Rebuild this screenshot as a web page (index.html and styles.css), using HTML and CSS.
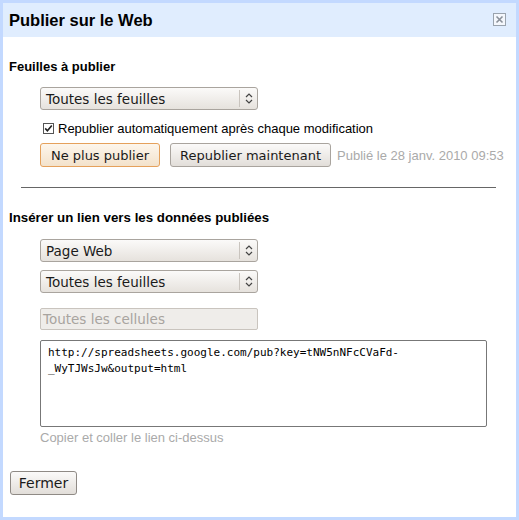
FILE: index.html
```html
<!DOCTYPE html>
<html lang="fr">
<head>
    <meta charset="UTF-8">
    <title>Publier sur le Web</title>
    <link rel="stylesheet" href="styles.css">
</head>
<body>
    <div class="dialog">
        <div class="title-bar">
            <span class="title">Publier sur le Web</span>
            <span class="close">
                <svg width="13" height="13" viewBox="0 0 13 13">
                    <rect x="0.5" y="0.5" width="12" height="12" fill="#f4f7fc" stroke="#9aa3ad"/>
                    <path d="M3.5 3.5 L9.5 9.5 M9.5 3.5 L3.5 9.5" stroke="#8a9099" stroke-width="1.6"/>
                </svg>
            </span>
        </div>
        <div class="content">
            <h3>Feuilles à publier</h3>
            <div class="group">
                <div class="select">
                    <span>Toutes les feuilles</span>
                    <span class="arrow"><svg width="8" height="11" viewBox="0 0 8 11"><path d="M1 4 L4 1 L7 4 M1 7 L4 10 L7 7" fill="none" stroke="#444" stroke-width="1.2"/></svg></span>
                </div>
                <label class="check">
                    <span class="box"><svg width="11" height="11" viewBox="0 0 11 11"><rect x="0.5" y="0.5" width="10" height="10" fill="#fff" stroke="#555"/><path d="M2.2 5.4 L4.4 7.8 L8.8 2.4" fill="none" stroke="#222" stroke-width="1.6"/></svg></span>
                    Republier automatiquement après chaque modification
                </label>
                <div class="actions">
                    <button class="btn btn-primary">Ne plus publier</button>
                    <button class="btn">Republier maintenant</button>
                    <span class="status">Publié le 28 janv. 2010 09:53</span>
                </div>
            </div>
            <hr>
            <h3>Insérer un lien vers les données publiées</h3>
            <div class="group link-group">
                <div class="select">
                    <span>Page Web</span>
                    <span class="arrow"><svg width="8" height="11" viewBox="0 0 8 11"><path d="M1 4 L4 1 L7 4 M1 7 L4 10 L7 7" fill="none" stroke="#444" stroke-width="1.2"/></svg></span>
                </div>
                <div class="select">
                    <span>Toutes les feuilles</span>
                    <span class="arrow"><svg width="8" height="11" viewBox="0 0 8 11"><path d="M1 4 L4 1 L7 4 M1 7 L4 10 L7 7" fill="none" stroke="#444" stroke-width="1.2"/></svg></span>
                </div>
                <div class="input-disabled">Toutes les cellules</div>
                <div class="link-box">http://spreadsheets.google.com/pub?key=tNW5nNFcCVaFd-<br>_WyTJWsJw&amp;output=html</div>
                <div class="hint">Copier et coller le lien ci-dessus</div>
            </div>
            <div class="footer">
                <button class="btn btn-close">Fermer</button>
            </div>
        </div>
    </div>
</body>
</html>
```

FILE: styles.css
```css
body {
    margin: 0;
    padding: 0;
    font-family: "Liberation Sans", Arial, sans-serif;
    background-color: #fff;
}
.dialog {
    width: 519px;
    height: 520px;
    box-sizing: border-box;
    border: 3px solid #c3d9ff;
    background-color: #fff;
}
.title-bar {
    display: flex;
    align-items: center;
    justify-content: space-between;
    height: 34px;
    padding: 0 10px 0 6px;
    background-color: #e0edfe;
}
.title {
    font-size: 16.5px;
    font-weight: bold;
    color: #000;
}
.close {
    display: flex;
    margin-top: -2px;
}
.content {
    padding: 22px 6px 0 6px;
}
h3 {
    margin: 0;
    font-size: 13px;
    font-weight: bold;
    color: #000;
}
.group {
    padding-left: 31px;
}
.select {
    display: flex;
    justify-content: space-between;
    align-items: center;
    width: 218px;
    height: 23px;
    box-sizing: border-box;
    margin-top: 8px;
    border: 1px solid #a9a49e;
    border-radius: 3px;
    background: linear-gradient(#fbfaf9, #e6e2dd);
    font-family: "DejaVu Sans", sans-serif;
    font-size: 13.5px;
    color: #1a1a1a;
}
.group > .select:first-child {
    margin-top: 13px;
}
.link-group > .select:first-child {
    margin-top: 14px;
}
.select span:first-child {
    padding-left: 5px;
}
.arrow {
    display: flex;
    align-items: center;
    justify-content: center;
    width: 17px;
    height: 17px;
    border-left: 1px solid #c9c4be;
}
.check {
    display: flex;
    align-items: center;
    gap: 4px;
    margin-top: 11px;
    margin-left: 3px;
    font-size: 13px;
    color: #000;
}
.box {
    display: flex;
}
.actions {
    display: flex;
    align-items: center;
    gap: 10px;
    margin-top: 7px;
}
.btn {
    height: 24px;
    padding: 0 9px;
    border: 1px solid #a9a49e;
    border-radius: 3px;
    background: linear-gradient(#fbfaf9, #e2ded9);
    font-family: "DejaVu Sans", sans-serif;
    font-size: 13px;
    color: #1a1a1a;
    white-space: nowrap;
}
.btn-primary {
    width: 120px;
    padding: 0;
    border-color: #e5a15c;
    background: linear-gradient(#fdf6ec, #f3e2cb);
}
.actions .status {
    margin-left: -4px;
    font-size: 13px;
    color: #aaa;
}
hr {
    margin: 20px 14px 0 12px;
    border: none;
    border-top: 1px solid #666;
}
hr + h3 {
    margin-top: 22px;
    font-size: 13.3px;
}
.input-disabled {
    width: 218px;
    height: 22px;
    box-sizing: border-box;
    margin-top: 15px;
    padding: 2px 2px;
    border: 1px solid #c9c4be;
    border-radius: 2px;
    background-color: #efedea;
    font-family: "DejaVu Sans", sans-serif;
    font-size: 13.5px;
    color: #a8a49f;
}
.link-box {
    width: 447px;
    height: 87px;
    box-sizing: border-box;
    margin-top: 10px;
    padding: 4px 7px;
    border: 1px solid #777;
    border-radius: 2px;
    font-family: "DejaVu Sans Mono", monospace;
    font-size: 11px;
    line-height: 16px;
    color: #000;
}
.hint {
    margin-top: 3px;
    font-size: 13px;
    color: #aaa;
}
.footer {
    margin-top: 26px;
    padding-left: 1px;
}
.btn-close {
    width: 67px;
    padding: 0;
    font-size: 14px;
    border-color: #8f8a85;
}
```
